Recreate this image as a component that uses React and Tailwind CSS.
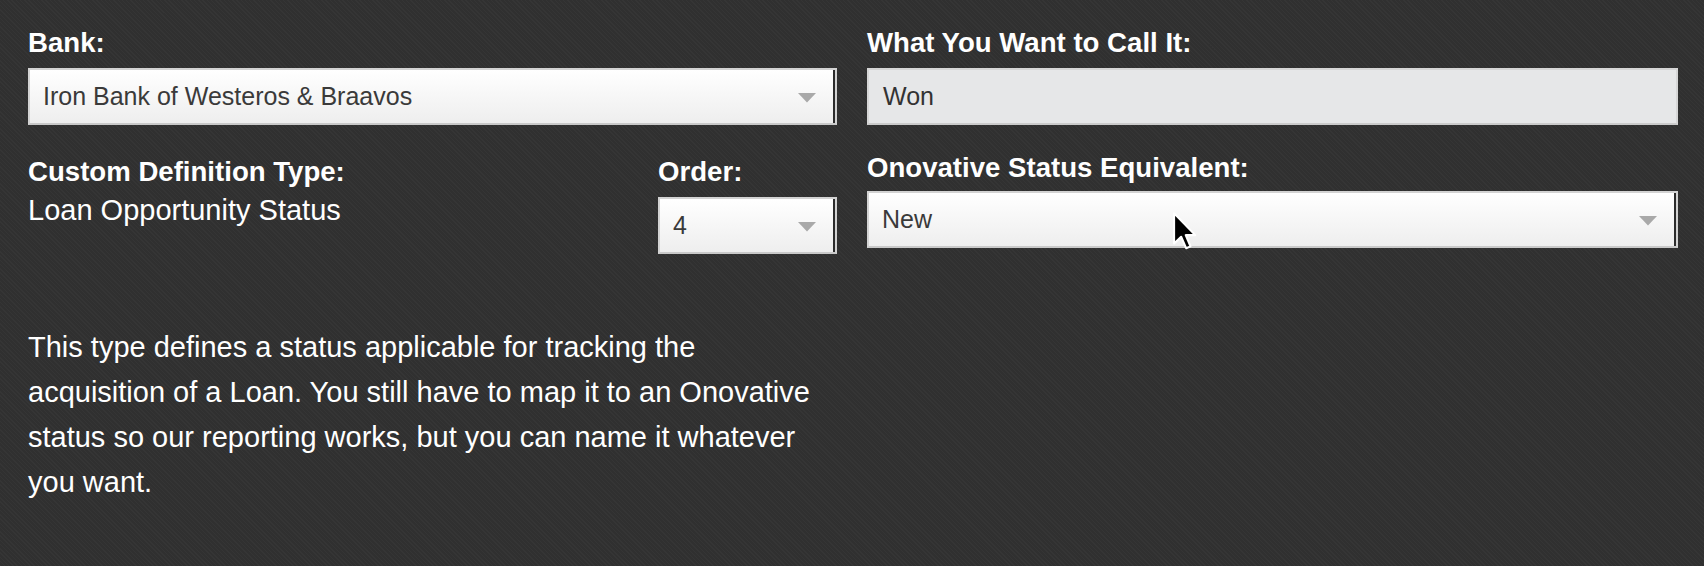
import React from "react";

const font = { fontFamily: '"Liberation Sans", Arial, Helvetica, sans-serif' };

function Label({ children, className = "" }) {
  return (
    <div className={`text-[27.6px] leading-[32px] font-bold text-white ${className}`}>
      {children}
    </div>
  );
}

function SelectBox({ value, className = "" }) {
  return (
    <div className={`h-[57px] border-2 border-[#d3d3d3] border-b-[#c9c9c9] bg-gradient-to-b from-white to-[#eeeeee] ${className}`}>
      <div className="flex h-full items-center justify-between border-r-2 border-[#2c2c2c] pl-[13px] pr-[17px]">
        <span className="text-[25px] text-[#3a3a3a]">{value}</span>
        <svg width="18" height="10" viewBox="0 0 18 10" className="mt-[2px]">
          <path d="M0 0 H18 L9 9.5 Z" fill="#a9a9a9" />
        </svg>
      </div>
    </div>
  );
}

function Cursor() {
  return (
    <svg
      width="27"
      height="42"
      viewBox="0 0 13 20"
      className="absolute left-[1172px] top-[211px]"
    >
      <path
        d="M1 1 L1 15.5 L4.4 12.3 L6.8 17.8 L8.9 16.9 L6.6 11.5 L11.2 11.5 Z"
        fill="#000"
        stroke="#fff"
        strokeWidth="1"
        strokeLinejoin="round"
      />
    </svg>
  );
}

export default function App() {
  return (
    <div
      style={font}
      className="relative min-h-[566px] w-full bg-[#323232] bg-[repeating-linear-gradient(45deg,#353535_0px,#353535_1px,#303030_1px,#303030_3px)] pl-[28px] pr-[26px] pt-[27px]"
    >
      <div className="grid grid-cols-[809px_1fr] gap-x-[30px]">
        {/* left column */}
        <div>
          <Label>Bank:</Label>
          <SelectBox className="mt-[9px]" value="Iron Bank of Westeros & Braavos" />

          <div className="mt-[31px] flex justify-between">
            <div>
              <Label>Custom Definition Type:</Label>
              <div className="mt-[4px] text-[29px] leading-[36px] text-white">
                Loan Opportunity Status
              </div>
            </div>
            <div className="w-[179px]">
              <Label>Order:</Label>
              <SelectBox className="mt-[9px]" value="4" />
            </div>
          </div>

          <p className="mt-[71px] max-w-[800px] text-[29px] leading-[45px] text-white">
            This type defines a status applicable for tracking the acquisition of a Loan. You still
            have to map it to an Onovative status so our reporting works, but you can name it
            whatever you want.
          </p>
        </div>

        {/* right column */}
        <div>
          <Label>What You Want to Call It:</Label>
          <div className="mt-[9px] flex h-[57px] items-center border-2 border-[#d6d6d6] border-b-[#cbcbcb] bg-[#e6e7e8] pl-[14px]">
            <span className="text-[25px] text-[#333]">Won</span>
          </div>

          <Label className="mt-[27px]">Onovative Status Equivalent:</Label>
          <SelectBox className="mt-[7px]" value="New" />
        </div>
      </div>

      <Cursor />
    </div>
  );
}
